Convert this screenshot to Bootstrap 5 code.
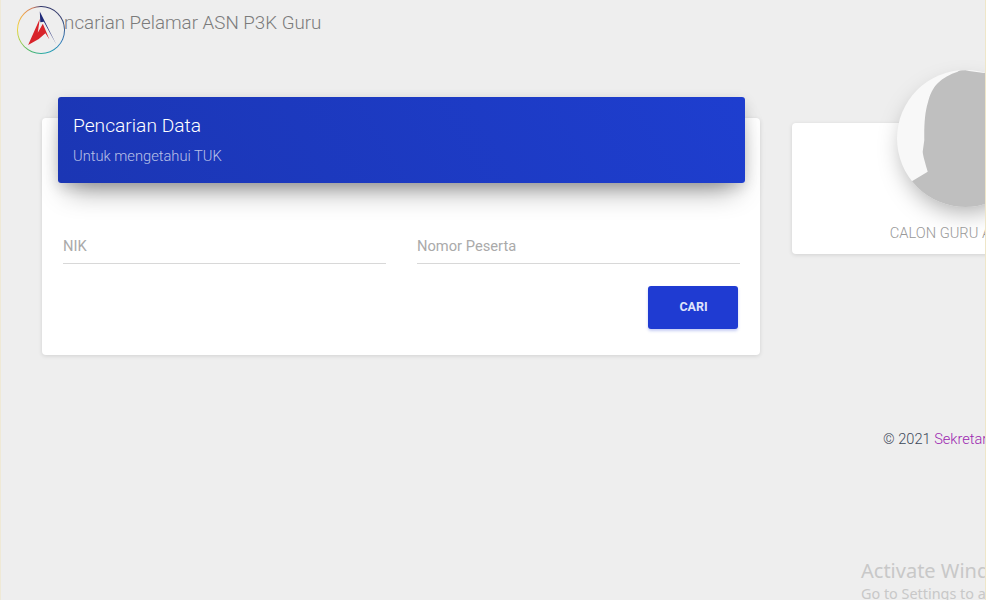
<!doctype html>
<html lang="id">
<head>
<meta charset="utf-8">
<title>Pencarian Pelamar ASN P3K Guru</title>
<link href="https://cdn.jsdelivr.net/npm/bootstrap@5.3.0/dist/css/bootstrap.min.css" rel="stylesheet">
<style>
html,body{height:600px;overflow:hidden}
body{background:#eee;font-family:Roboto,"Liberation Sans",sans-serif;font-weight:300;color:#3c4858;position:relative;border-left:1px solid #efe9d6}
.edge-line{position:absolute;top:0;right:0;bottom:0;width:1px;background:#efe6c8}
.top-bar{height:97px;padding:0 0 0 16px;align-items:flex-start}
.logo-wrap{width:48px;height:48px;margin-top:6px;border-radius:50%;background:conic-gradient(#2a3168 0deg,#39406e 60deg,#2a78b8 120deg,#22a6b0 165deg,#45b56c 205deg,#a9cf45 245deg,#f0d53a 275deg,#efa547 310deg,#cf7a5c 340deg,#2a3168 360deg);padding:1.2px;flex:none;position:relative;z-index:2}
.logo-inner{display:block;width:100%;height:100%;border-radius:50%;background:#eee}
.page-title{font-size:18.75px;line-height:22px;margin:12px 0 0 -22px;color:#7b7b7b;font-weight:300;white-space:nowrap}
.main-area{padding-left:41px;gap:32px;width:1200px;align-items:flex-start}
.search-card{width:718px;height:237px;margin-top:21px;border:0;border-radius:4px;box-shadow:0 1px 4px rgba(0,0,0,.12)}
.blue-head{margin:-21px 15px 0 16px;height:86px;padding:16px 15px 0;background:linear-gradient(60deg,#1b36b4,#1e3ecf);border:0;border-radius:3px!important;box-shadow:0 16px 28px -10px rgba(0,0,0,.42),0 4px 14px rgba(0,0,0,.14);color:#fff}
.blue-head h4{font-size:19.2px;line-height:25px;font-weight:300;margin:0 0 8px;color:#fff}
.blue-head p{font-size:14.7px;line-height:20px;margin:0;color:rgba(255,255,255,.7);font-weight:300}
.form-zone{padding:46px 20px 0 21px}
.form-zone .row{--bs-gutter-x:31px;margin:0 -15.5px}
.line-input{height:35px;border:0;border-bottom:1px solid #d8d8d8;border-radius:0;padding:0;background:transparent;font-size:14.7px;font-weight:400;box-shadow:none}
.line-input::placeholder{color:#aaa;opacity:1}
.cari-row{margin-top:22px;padding-right:2px}
.btn-cari{width:90px;height:43px;background:#1f3bd2;border:0;border-radius:3px;color:#dfe3fa;font-size:12.5px;font-weight:700;box-shadow:0 2px 3px rgba(31,59,210,.25);padding:0 0 0 1px}
.profile-card{width:346px;height:131px;margin-top:26px;border:0;border-radius:4px;box-shadow:0 1px 4px rgba(0,0,0,.12);flex:none}
.avatar-box{width:137px;height:137px;margin:-53px auto 0;border-radius:50%;overflow:hidden;box-shadow:0 10px 24px -6px rgba(0,0,0,.35);background:#f8f8f8}
.avatar-box svg{display:block}
.profile-role{margin:16px 0 0;text-align:center;font-size:14.7px;line-height:20px;color:#999;font-weight:300;white-space:nowrap}
.foot-line{margin:74px 0 0 882px;font-size:14.6px;line-height:20px;white-space:nowrap;color:#3c4858;font-weight:300;width:400px}
.foot-line a{color:#9c27b0;text-decoration:none}
.activate-mark{position:absolute;left:860px;top:557px;font-family:"Noto Sans","Open Sans",sans-serif;color:#c8c8c8;white-space:nowrap;font-weight:400}
.activate-mark b{display:block;font-weight:400;font-size:20px;line-height:28px}
.activate-mark i{display:block;font-style:normal;font-size:14.4px;line-height:18px;margin-top:0}
</style>
</head>
<body>
<nav class="top-bar d-flex">
  <span class="page-title order-2">Pencarian Pelamar ASN P3K Guru</span>
  <span class="logo-wrap order-1">
    <svg class="logo-inner" viewBox="0 0 45 45" aria-label="Logo">
      <polygon points="21.5,4.5 37.5,36.5 25.5,14.5 22,15" fill="#1f2a78"/>
      <polygon points="21.5,11.5 10,37.5 20.5,31.5 27,26 31,32 24.5,16.5 19.5,25.5" fill="#d8232a"/>
    </svg>
  </span>
</nav>
<main class="main-area d-flex">
  <section class="card search-card flex-none">
    <div class="card-header blue-head">
      <h4>Pencarian Data</h4>
      <p>Untuk mengetahui TUK</p>
    </div>
    <form class="form-zone">
      <div class="row">
        <div class="col-6"><input class="form-control line-input" type="text" placeholder="NIK"></div>
        <div class="col-6"><input class="form-control line-input" type="text" placeholder="Nomor Peserta"></div>
      </div>
      <div class="d-flex justify-content-end cari-row">
        <button type="button" class="btn btn-cari">CARI</button>
      </div>
    </form>
  </section>
  <section class="card profile-card">
    <div class="avatar-box">
      <svg width="137" height="137" viewBox="0 0 137 137">
        <path d="M60.7 1.7 C62 0 70 0 72 1 L87 3 L137 3 L137 137 L0 137 L0 118 L15.7 110.7 L30.7 101.7 C28 92 26 86 25.7 81.7 L27.3 70 C27 55 28 42 30.7 33.3 C33 24 36 18 40.7 13.3 C46 8 53 4 60.7 1.7 Z" fill="#bfbfbf"/>
      </svg>
    </div>
    <p class="profile-role">CALON GURU ASN P3K</p>
  </section>
</main>
<footer class="foot-line">© 2021 <a href="#">Sekretariat Nasional</a></footer>
<div class="activate-mark"><b>Activate Windows</b><i>Go to Settings to activate Windows.</i></div>
<div class="edge-line"></div>
<script src="https://cdn.jsdelivr.net/npm/bootstrap@5.3.0/dist/js/bootstrap.bundle.min.js"></script>
</body>
</html>
